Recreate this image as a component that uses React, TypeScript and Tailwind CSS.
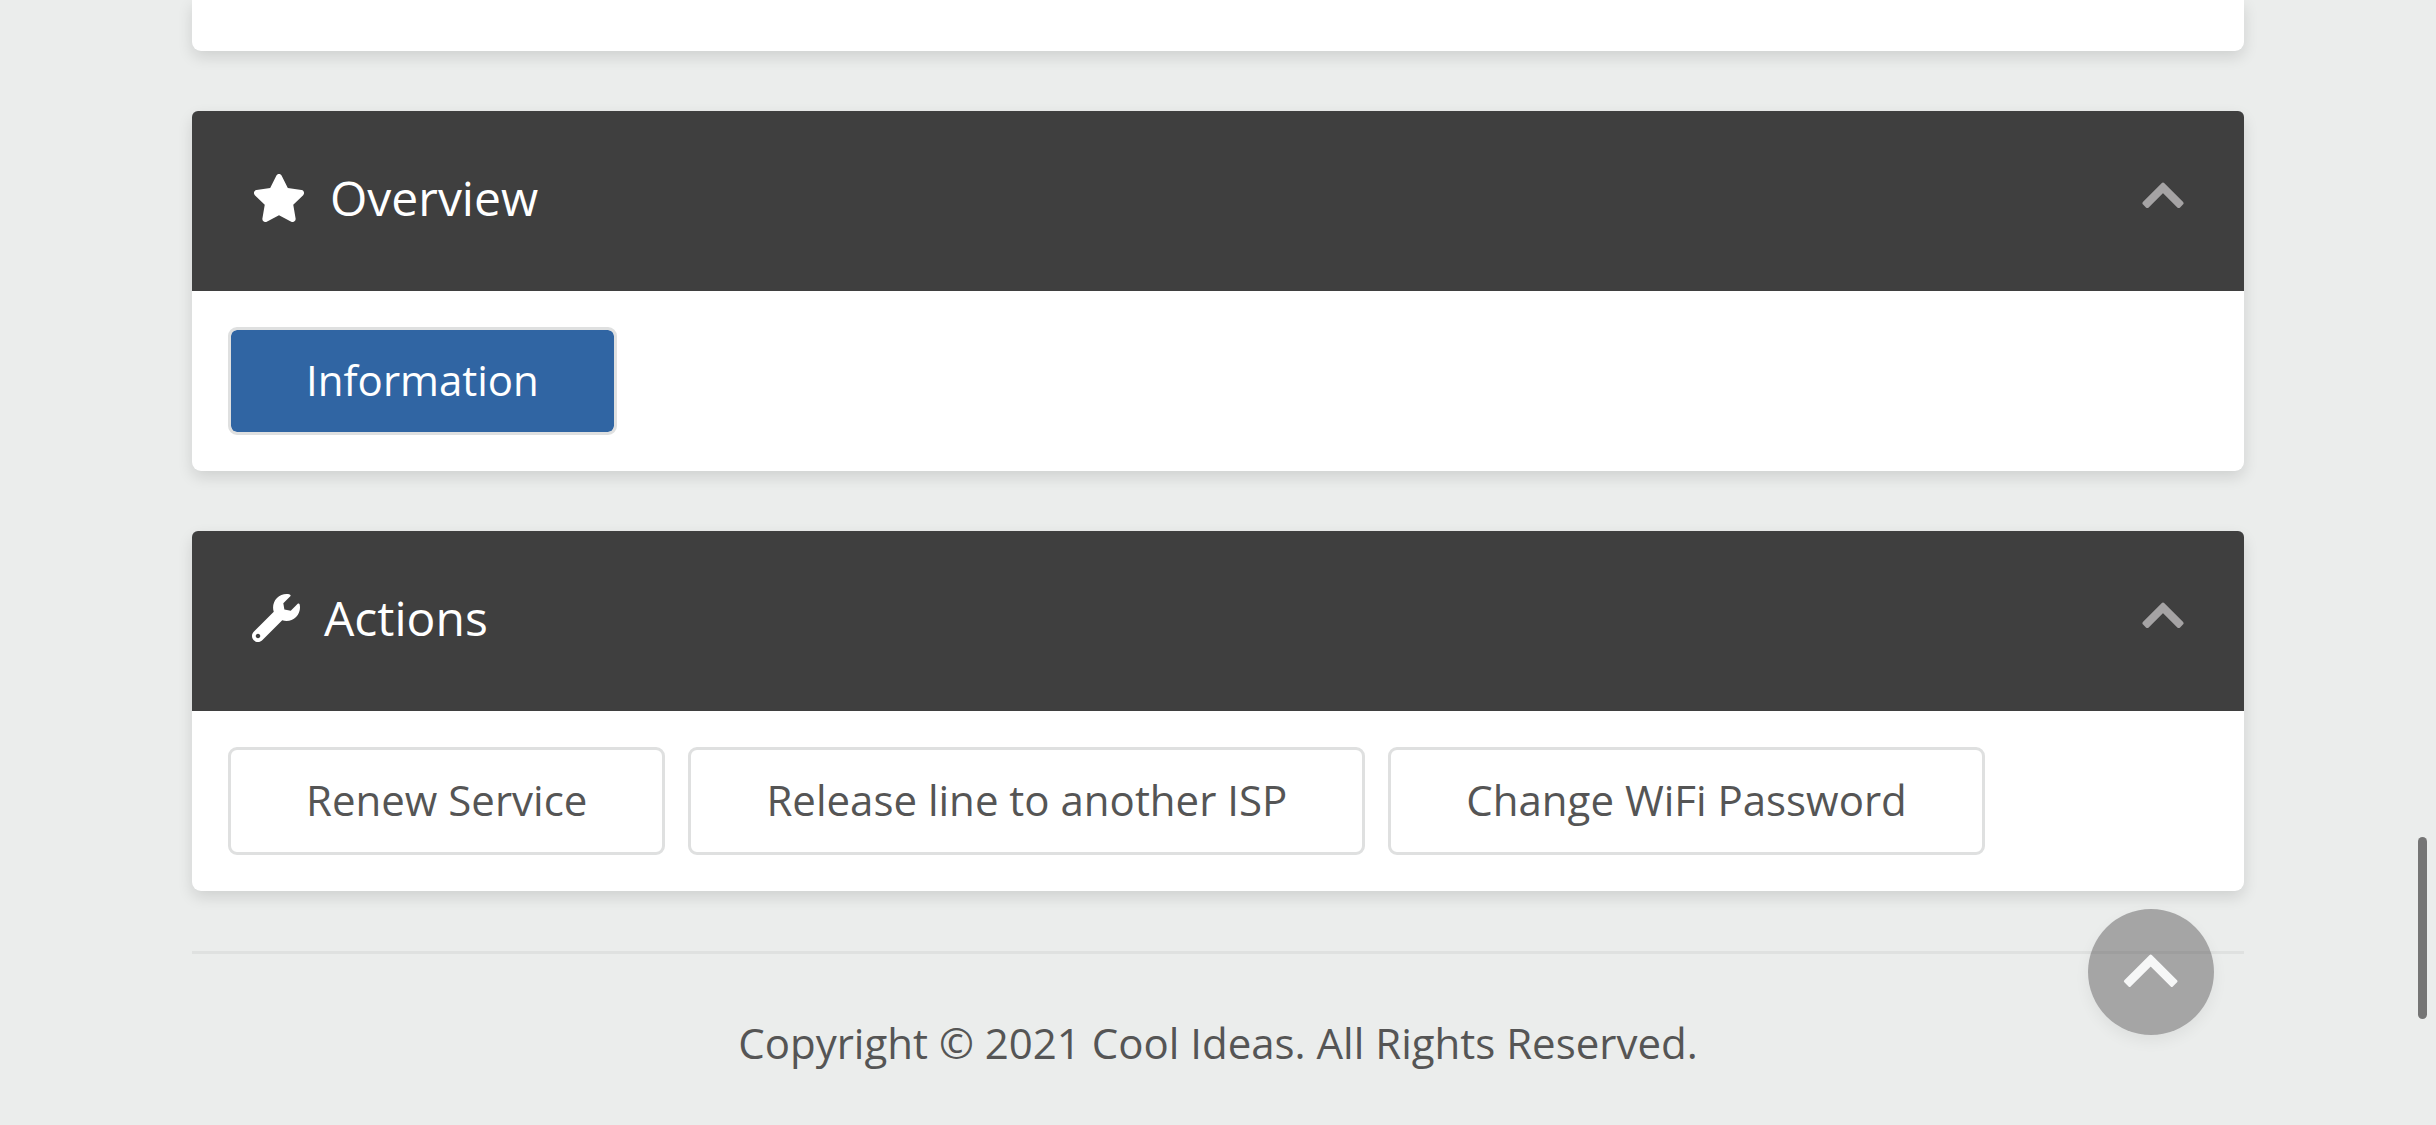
import React, { useState } from 'react';
import { FaStar, FaWrench } from 'react-icons/fa';

interface PanelProps {
  title: string;
  icon: React.ReactNode;
  children: React.ReactNode;
}

const Panel: React.FC<PanelProps> = ({ title, icon, children }) => {
  const [open, setOpen] = useState(true);

  return (
    <section className="rounded-[9px] bg-white shadow-[0_6px_15px_rgba(0,0,0,0.12)]">
      <header className="flex items-center justify-between rounded-t-[6px] bg-[#3f3f3f] px-[60px] pt-[51px] pb-[57px] text-white">
        <h2 className="flex items-center gap-6 text-[48px] leading-[72px]">
          {icon}
          {title}
        </h2>
        <button
          type="button"
          aria-label={`Toggle ${title}`}
          aria-expanded={open}
          onClick={() => setOpen(!open)}
          className="text-[#a5a3a4]"
        >
          <svg
            viewBox="0 0 42 48"
            fill="currentColor"
            stroke="currentColor"
            strokeWidth="4"
            strokeLinejoin="round"
            className={`h-12 w-[42px] ${open ? '' : 'rotate-180'}`}
          >
            <path d="M21 10.7 39.5 29.2 36.7 32 21 16.3 5.3 32 2.5 29.2Z" />
          </svg>
        </button>
      </header>
      {open && <div className="flex flex-wrap gap-[23px] p-9">{children}</div>}
    </section>
  );
};

interface ActionButtonProps {
  label: string;
  active?: boolean;
}

const ActionButton: React.FC<ActionButtonProps> = ({ label, active }) => (
  <button
    type="button"
    className={`rounded-[9px] border-[3px] border-[#dfe0e0] bg-clip-padding px-[75px] pt-5 pb-[22px] text-[42px] leading-[60px] ${
      active ? 'bg-[#3065a3] text-white' : 'bg-white text-[#555555]'
    }`}
  >
    {label}
  </button>
);

const actions = ['Renew Service', 'Release line to another ISP', 'Change WiFi Password'];

const App: React.FC = () => {
  return (
    <div className="min-h-screen bg-[#ebedec] px-[192px] font-['Open_Sans',sans-serif] text-[#555555]">
      <main className="flex flex-col gap-[60px]">
        {/* tail of the previous panel */}
        <section className="rounded-b-[9px] bg-white pt-[51px] shadow-[0_6px_15px_rgba(0,0,0,0.12)]" />

        <Panel title="Overview" icon={<FaStar className="h-12 w-[54px]" />}>
          <ActionButton label="Information" active />
        </Panel>

        <Panel title="Actions" icon={<FaWrench className="size-12" />}>
          {actions.map((label) => (
            <ActionButton key={label} label={label} />
          ))}
        </Panel>
      </main>

      <footer className="mt-[60px] border-t-[3px] border-[#dfe1e0] pt-[59px] text-center text-[42px] leading-[60px]">
        <p>Copyright © 2021 Cool Ideas. All Rights Reserved.</p>
      </footer>

      {/* back to top */}
      <button
        type="button"
        aria-label="Back to top"
        onClick={() => window.scrollTo({ top: 0, behavior: 'smooth' })}
        className="fixed right-[222px] bottom-[90px] flex size-[126px] items-center justify-center rounded-full bg-[#3c3a3b]/40 text-[#f6f7f7] shadow-[0_6px_15px_rgba(0,0,0,0.06)]"
      >
        <svg
          viewBox="0 0 60 60"
          fill="currentColor"
          stroke="currentColor"
          strokeWidth="3"
          strokeLinejoin="round"
          className="size-[60px]"
        >
          <path d="M29.7 14 55 39.3 50.8 43.5 29.7 22.4 8.6 43.5 4.4 39.3Z" />
        </svg>
      </button>

      {/* scroll thumb */}
      <div className="fixed right-[9px] bottom-[106px] h-[182px] w-[9px] rounded-full bg-[#757575]" />
    </div>
  );
};

export default App;
